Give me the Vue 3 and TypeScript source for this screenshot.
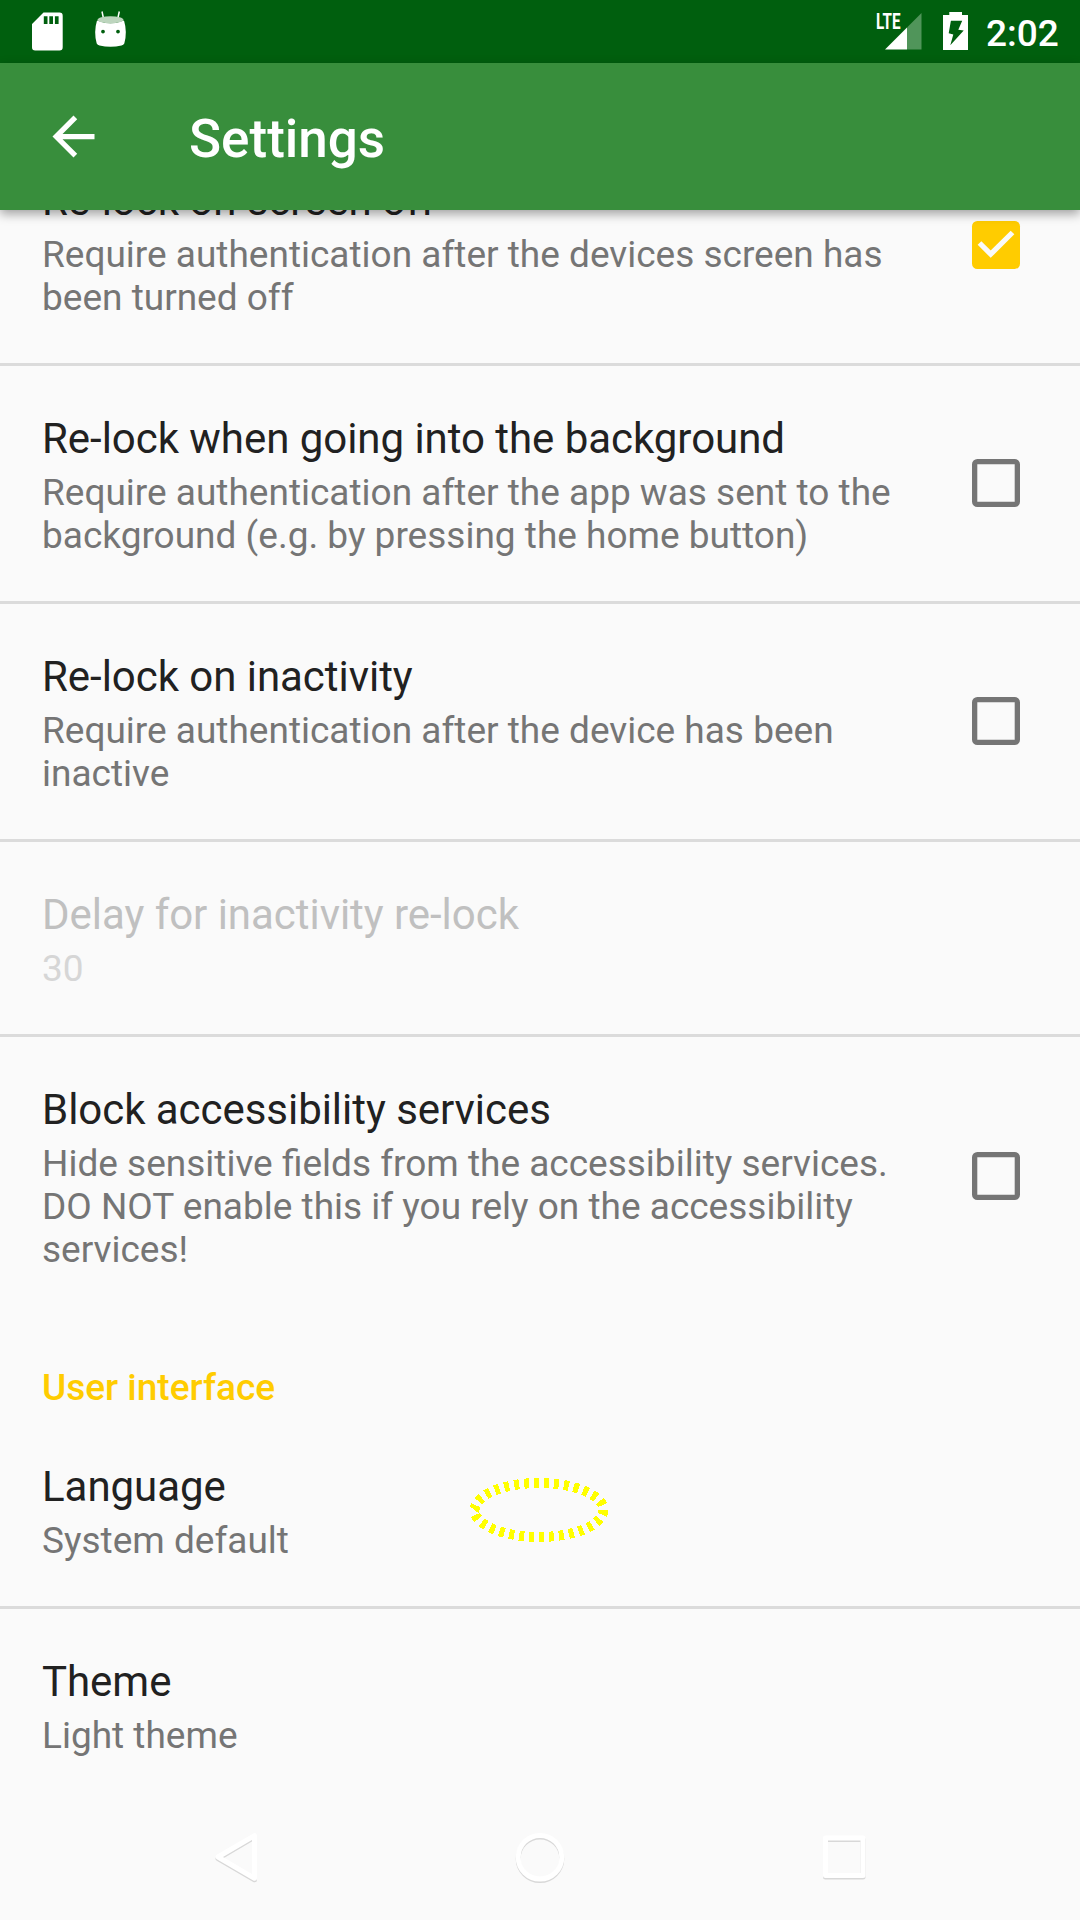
<script setup lang="ts">
interface Preference {
  title: string
  lines: string[]
  checked?: boolean
  disabled?: boolean
  last?: boolean
}

const security: Preference[] = [
  {
    title: 'Re-lock on screen off',
    lines: ['Require authentication after the devices screen has', 'been turned off'],
    checked: true,
  },
  {
    title: 'Re-lock when going into the background',
    lines: ['Require authentication after the app was sent to the', 'background (e.g. by pressing the home button)'],
    checked: false,
  },
  {
    title: 'Re-lock on inactivity',
    lines: ['Require authentication after the device has been', 'inactive'],
    checked: false,
  },
  { title: 'Delay for inactivity re-lock', lines: ['30'], disabled: true },
  {
    title: 'Block accessibility services',
    lines: [
      'Hide sensitive fields from the accessibility services.',
      'DO NOT enable this if you rely on the accessibility',
      'services!',
    ],
    checked: false,
    last: true,
  },
]

const ui: Preference[] = [
  { title: 'Language', lines: ['System default'] },
  { title: 'Theme', lines: ['Light theme'], last: true },
]

const groups: { name?: string; items: Preference[] }[] = [
  { items: security },
  { name: 'User interface', items: ui },
]
</script>

<template>
  <div class="screen">
    <div class="status">
      <svg class="sd" width="31" height="38" viewBox="0 0 31 38">
        <path fill="#fff" fill-rule="evenodd" d="M11.5 .5H27.5a3.2 3.2 0 0 1 3.2 3.2V35.3a3.2 3.2 0 0 1-3.2 3.2H3.2A3.2 3.2 0 0 1 0 35.300V12ZM11.8 4.300V12h3.700V4.300ZM17.300 4.300V12h3.700V4.300ZM22.900 4.300V12h3.700V4.300Z" />
      </svg>
      <svg class="droid" width="31" height="37" viewBox="0 0 31 37">
        <path d="M7 .5 8.6 8M24.3 .5 22.7 8" stroke="#fff" stroke-width="1.5" fill="none" />
        <path fill="#fff" fill-rule="evenodd" d="M2 9.5Q15.500 15 29 9.500Q32.500 21 29.300 32.500Q28.500 34 26.500 34.500Q15.500 37 4.500 34.500Q2.500 34 1.700 32.500Q-1.500 21 2 9.500ZM8 18.700a1.900 1.900 0 1 0 .01 3.800a1.900 1.900 0 1 0-.01-3.800ZM23 18.700a1.900 1.900 0 1 0 .01 3.800a1.900 1.900 0 1 0-.01-3.800Z" />
        <ellipse cx="15.500" cy="8.700" rx="12.900" ry="3.500" fill="#bdd5be" />
      </svg>
      <div class="grow"></div>
      <svg class="signal" width="46" height="38" viewBox="0 0 46 38">
        <path d="M45.500 1V37.500H31V15.500Z" fill="#50955a" />
        <path d="M31 15.500V37.500H9Z" fill="#fff" />
        <text x="0" y="17" font-size="21.500" font-weight="700" fill="#fff" textLength="24.500" lengthAdjust="spacingAndGlyphs">LTE</text>
      </svg>
      <svg class="battery" width="25" height="38" viewBox="0 0 25 38">
        <path fill="#fff" fill-rule="evenodd" d="M6.300 0H19V3H25V38H0V3H6.300ZM7.900 8.800 5.700 21.300 10.300 22.500 7.300 33.300 20.700 18.600 15.300 17.800 19.200 8.800Z" />
      </svg>
      <span class="clock">2:02</span>
    </div>

    <header class="toolbar">
      <svg width="63" height="63" viewBox="0 0 24 24">
        <path fill="#fff" d="M20 11H7.830l5.590-5.590L12 4l-8 8 8 8 1.410-1.410L7.830 13H20v-2z" />
      </svg>
      <h1>Settings</h1>
    </header>

    <main class="list">
      <section v-for="(g, gi) in groups" :key="gi" :class="{ first: gi === 0 }">
        <h2 v-if="g.name">{{ g.name }}</h2>
        <div
          v-for="p in g.items"
          :key="p.title"
          class="item"
          :class="{ disabled: p.disabled, last: p.last }"
        >
          <div class="text">
            <div class="title">{{ p.title }}</div>
            <div class="summary">
              <div v-for="l in p.lines" :key="l">{{ l }}</div>
            </div>
          </div>
          <svg v-if="p.checked !== undefined" class="box" width="48" height="48" viewBox="0 0 48 48">
            <template v-if="p.checked">
              <rect width="48" height="48" rx="5.300" fill="#ffcc00" />
              <path d="M7.500 22 18.700 33.200 40.500 11.500" fill="none" stroke="#fafafa" stroke-width="5.200" />
            </template>
            <rect v-else x="2.650" y="2.650" width="42.700" height="42.700" rx="2.700" fill="none" stroke="#757575" stroke-width="5.300" />
          </svg>
        </div>
      </section>
    </main>

    <nav class="nav">
      <svg width="50" height="56" viewBox="0 0 50 56">
        <path class="shade" transform="translate(0 1.500)" d="M43.500 5.700V48.300L7 27Z" />
        <path class="line" d="M43.500 5.700V48.300L7 27Z" />
      </svg>
      <svg width="56" height="56" viewBox="0 0 56 56">
        <circle class="shade" cx="28" cy="28.700" r="21.800" />
        <circle class="line" cx="28" cy="27.200" r="21.800" />
      </svg>
      <svg width="50" height="56" viewBox="0 0 50 56">
        <rect class="shade" x="6.500" y="9.500" width="37.500" height="37.500" />
        <rect class="line" x="6.500" y="8" width="37.500" height="37.500" />
      </svg>
    </nav>

    <svg class="marker" width="140" height="66" viewBox="0 0 140 66">
      <ellipse cx="70" cy="33" rx="64.500" ry="27" pathLength="300" fill="none" stroke="#ffff00" stroke-width="10" stroke-dasharray="5 5" shape-rendering="crispEdges" />
    </svg>
  </div>
</template>

<style>
body {
  background: #fafafa;
}
</style>

<style scoped>
.screen {
  position: relative;
  width: 1080px;
  height: 1920px;
  display: flex;
  flex-direction: column;
  overflow: hidden;
  background: #fafafa;
  font-family: Roboto, 'Liberation Sans', sans-serif;
  color: #212121;
}
.screen svg {
  display: block;
  flex: none;
  overflow: visible;
}
.status {
  flex: none;
  height: 63px;
  box-sizing: border-box;
  padding: 12px 21px 0 32px;
  display: flex;
  align-items: flex-start;
  background: #005f0e;
  color: #fff;
}
.droid {
  margin-left: 32px;
  margin-top: -1px;
}
.grow {
  flex: 1;
}
.battery {
  margin-left: 21px;
}
.clock {
  margin-left: 18px;
  font-size: 37px;
  font-weight: 500;
  line-height: 43px;
  width: 73px;
  white-space: nowrap;
}
.toolbar {
  flex: none;
  position: relative;
  z-index: 1;
  height: 147px;
  display: flex;
  align-items: center;
  padding-left: 42px;
  background: #388e3c;
  box-shadow: 0 4px 10px rgba(0, 0, 0, 0.36);
}
.toolbar h1 {
  margin: 5px 0 0 84px;
  color: #fff;
  font-size: 53px;
  line-height: 62px;
  font-weight: 500;
}
.list {
  flex: 1;
  min-height: 0;
  overflow: hidden;
}
.first {
  margin-top: -82px;
}
h2 {
  margin: 0;
  padding: 48px 42px 5px;
  font-size: 37px;
  line-height: 43px;
  font-weight: 500;
  color: #ffcc00;
}
.item {
  display: flex;
  align-items: center;
  justify-content: space-between;
  padding: 48px 60px 44px 42px;
  border-bottom: 3px solid #dbdbdb;
}
.item.last {
  border-bottom-color: transparent;
}
.box {
  margin-bottom: 5px;
}
.title {
  font-size: 42px;
  line-height: 50px;
  letter-spacing: -0.04px;
  white-space: nowrap;
}
.summary {
  margin-top: 7px;
  font-size: 37px;
  line-height: 43px;
  color: #757575;
  white-space: nowrap;
}
.disabled .title {
  color: #c0c0c0;
}
.disabled .summary {
  color: #d6d6d6;
}
.nav {
  flex: none;
  height: 126px;
  box-sizing: border-box;
  padding: 36px 211px 0 211px;
  display: flex;
  justify-content: space-between;
}
.line,
.shade {
  fill: none;
  stroke-width: 5;
  stroke-linejoin: round;
}
.line {
  stroke: #fff;
}
.shade {
  stroke: #d8d8d8;
}
.marker {
  position: absolute;
  left: 469px;
  top: 1477px;
}
</style>
